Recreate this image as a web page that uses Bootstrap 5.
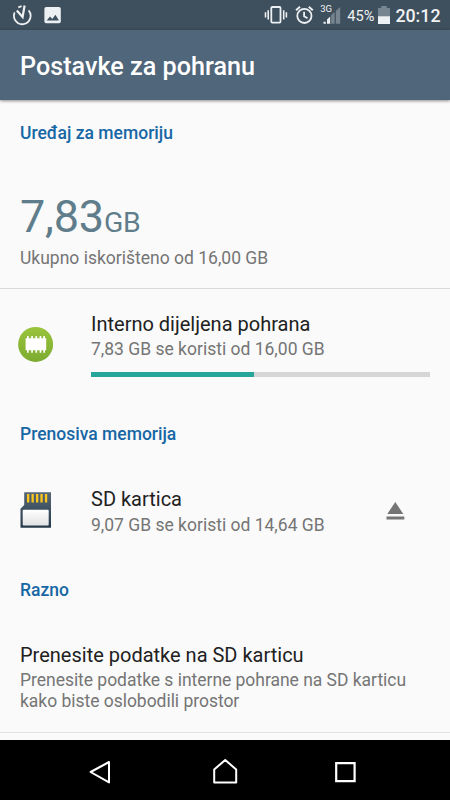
<!DOCTYPE html>
<html lang="hr">
<head>
<meta charset="utf-8">
<meta name="viewport" content="width=device-width, initial-scale=1">
<title>Postavke za pohranu</title>
<link href="https://cdn.jsdelivr.net/npm/bootstrap@5.3.0/dist/css/bootstrap.min.css" rel="stylesheet">
<style>
body{font-family:Roboto,sans-serif;background:#fafafa;color:#212121;height:800px}
svg{display:block;flex:none}
.status-bar{height:30px;background:#3e4f5d;color:#f1f3f4;padding:0 9.5px 0 12px}
.net-label{font-size:9.5px;line-height:12px;width:12px;margin-right:-11px;margin-top:3px}
.battery-text{font-size:14.6px;line-height:30px;padding-top:1px;margin-left:6px;margin-right:3px}
.clock{font-size:17.8px;line-height:30px;font-weight:500;padding-top:1px}
.app-bar{height:70px;background:#50667a;padding:3px 20px 0;box-shadow:0 1px 3px rgba(0,0,0,.45);z-index:1}
.app-bar h1{font-size:25.2px;line-height:30px;font-weight:500}
.section-title{font-size:17.5px;line-height:24px;font-weight:500;color:#1767a5;padding:0 20px;margin:0}
.section-title.first-title{padding-top:21px;padding-bottom:21px}
.sum-block{height:123px;padding:24px 20px 0;border-bottom:1px solid #d9d9d9}
.total{font-size:45px;line-height:54px;color:#607d8b;letter-spacing:-.2px}
.total span{font-size:28.4px}
.internal-row{padding-top:23px;height:133px}
.card-row{padding-top:41px;height:132px}
.misc-row{padding:41px 20px 0;height:131px}
.item-title{font-size:20px;line-height:24px}
.item-sub{font-size:17.5px;line-height:24px;color:#757575;margin-top:1px}
.sum-block .item-sub{margin-top:-4px}
.card-row .item-sub{margin-top:2px}
.misc-row .item-sub{line-height:20.5px;margin-top:3px;letter-spacing:-.03px}
.progress{--bs-progress-height:5px;--bs-progress-bg:#d6d6d6;--bs-progress-bar-bg:#26a69a;margin-top:11px}
.lead-icon{width:91px;flex:none}
.eject{margin-right:45.5px}
.nav-keys{height:60px;background:#000;padding:0 93px 0 87px}
.nav-keys .home{margin-left:4px}
</style>
<script src="https://cdn.jsdelivr.net/npm/bootstrap@5.3.0/dist/js/bootstrap.bundle.min.js" defer></script>
</head>
<body class="d-flex flex-column overflow-hidden">
<div class="status-bar d-flex justify-content-between flex-shrink-0">
  <div class="d-flex align-items-center">
    <svg width="21" height="24" viewBox="0 0 21 24" fill="none" stroke="#edf0f2" stroke-width="1.8"><path d="M2.6 9.4A8.4 8.4 0 1 0 16.6 7.3"/><path d="M4.8 7.4 10.6 14 12.6 2.5" stroke-width="2.2"/><path d="M6.3 4.4 9.6 3.2" stroke-width="1.8"/></svg>
    <svg class="ms-2" width="24" height="24" viewBox="0 0 24 24"><rect x="3.4" y="4" width="16.4" height="16.2" rx="1.8" fill="#edf0f2"/><path d="m5.7 17.5 3.3-4 2.3 2.5 3.1-4.2 3.6 5.7z" fill="#3e4f5d"/></svg>
  </div>
  <div class="d-flex align-items-center">
    <svg width="24" height="24" viewBox="0 0 24 24" fill="none" stroke="#edf0f2" stroke-width="1.8"><rect x="7.3" y="4" width="9.2" height="15.6" rx="1"/><path d="M4.2 7.2v9.4M1.5 9.3v5.2M19.7 7.2v9.4M22.4 9.3v5.2" stroke-width="1.6"/></svg>
    <svg class="ms-1 me-1" width="24" height="24" viewBox="0 0 24 24" fill="none" stroke="#edf0f2" stroke-width="1.8"><circle cx="12.4" cy="12.9" r="7.1"/><path d="M12.1 8.7v4.6l3.4 2"/><path d="m4 7.2 4-3.4M20.8 7.2l-4-3.4" stroke-width="2"/></svg>
    <div class="net-label align-self-start">3G</div>
    <svg width="20" height="24" viewBox="0 0 20 24"><path d="M2.5 18.8h2.3v2H2.5zM6 16.4l3.2-2.8v7.2H6z" fill="#edf0f2"/><path d="m10.2 12 3.4-3v11.8h-3.4zM14.8 7.9l4.4-4v16.9h-4.4z" fill="#768590"/></svg>
    <div class="battery-text">45%</div>
    <svg width="14" height="24" viewBox="0 0 14 24"><path d="M1 5h3.2V3h5.6v2H13v8.2H1z" fill="#768590"/><path d="M1 13.2h12V21H1z" fill="#edf0f2"/></svg>
    <div class="clock ms-1">20:12</div>
  </div>
</div>
<header class="app-bar d-flex align-items-center flex-shrink-0 position-relative text-white">
  <h1 class="m-0">Postavke za pohranu</h1>
</header>
<main class="flex-grow-1 overflow-hidden">
  <h2 class="section-title first-title">Uređaj za memoriju</h2>
  <section class="sum-block">
    <div class="total">7,83<span>GB</span></div>
    <div class="item-sub">Ukupno iskorišteno od 16,00 GB</div>
  </section>
  <section class="internal-row d-flex">
    <div class="lead-icon">
      <svg width="70" height="64" viewBox="0 0 70 64"><defs><linearGradient id="g" x2="0" y2="1"><stop stop-color="#9ac43c"/><stop offset="1" stop-color="#7cab31"/></linearGradient></defs><circle cx="35.6" cy="32.4" r="17.5" fill="url(#g)"/><path d="M25.6 26.2h1.4v-2.3h1.7v2.3h2.5v-2.3h1.7v2.3h2.5v-2.3h1.7v2.3h2.5v-2.3h1.7v2.3h2v-2.3H45v2.3h1.2v12H45v2.6h-1.7v-2.6h-2v2.6h-1.7v-2.6h-2.5v2.6h-1.7v-2.6h-2.5v2.6h-1.7v-2.6h-2.5v2.6H27v-2.6h-1.4z" fill="#fff"/></svg>
    </div>
    <div class="flex-grow-1 me-3 pe-1">
      <div class="item-title">Interno dijeljena pohrana</div>
      <div class="item-sub">7,83 GB se koristi od 16,00 GB</div>
      <div class="progress rounded-0" role="progressbar"><div class="progress-bar" style="width:48%"></div></div>
    </div>
  </section>
  <h2 class="section-title">Prenosiva memorija</h2>
  <section class="card-row d-flex">
    <div class="lead-icon">
      <svg width="70" height="48" viewBox="0 0 70 48"><defs><linearGradient id="s" x2="0" y2="1"><stop stop-color="#566878"/><stop offset="1" stop-color="#26394a"/></linearGradient><linearGradient id="w" x2="0" y2="1"><stop stop-color="#fff"/><stop offset="1" stop-color="#e2e2e4"/></linearGradient></defs><path d="M24.2 5.2H51v35.5H20.5V21.8l3.7-3.7z" fill="url(#s)"/><path d="M27 7h2.3v8.5H27zm4.5 0h2.3v8.5h-2.3zm4.5 0h2.3v8.5H36zm4.4 0h2.3v8.5h-2.3zm4.5 0h2.3v8.5h-2.3z" fill="#fac51c"/><rect x="22.7" y="22.8" width="26" height="15.8" rx="1" fill="url(#w)"/></svg>
    </div>
    <div>
      <div class="item-title">SD kartica</div>
      <div class="item-sub">9,07 GB se koristi od 14,64 GB</div>
    </div>
    <svg class="eject ms-auto" width="19" height="48" viewBox="0 0 19 48" fill="#757575"><path d="M9.3 14.9 17.3 27H1.3zM.5 29.6h17.8v2.8H.5z"/></svg>
  </section>
  <h2 class="section-title">Razno</h2>
  <section class="misc-row border-bottom">
    <div class="item-title">Prenesite podatke na SD karticu</div>
    <div class="item-sub">Prenesite podatke s interne pohrane na SD karticu kako biste oslobodili prostor</div>
  </section>
</main>
<nav class="nav-keys d-flex justify-content-between align-items-center flex-shrink-0">
  <svg width="25" height="28" viewBox="0 0 25 28" fill="none" stroke="#fff" stroke-width="2"><path d="M3.6 16 22 6v20.4z" stroke-linejoin="round"/></svg>
  <svg class="home" width="28" height="30" viewBox="0 0 28 30" fill="none" stroke="#fff" stroke-width="2"><path d="M3.2 14.4 14.2 5l11 9.4v13H3.2z" stroke-linejoin="round"/></svg>
  <svg width="24" height="28" viewBox="0 0 24 28" fill="none" stroke="#fff" stroke-width="2.2"><path d="M3.2 7.1h18.4v18H3.2z"/></svg>
</nav>
</body>
</html>
